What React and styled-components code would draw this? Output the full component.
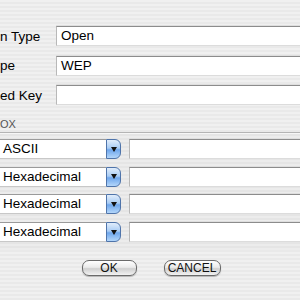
import React from "react";
import styled, { createGlobalStyle } from "styled-components";

const GlobalStyle = createGlobalStyle`
  html, body {
    margin: 0;
    padding: 0;
    width: 300px;
    height: 300px;
    overflow: hidden;
  }
  body {
    font-family: "Liberation Sans", "DejaVu Sans", sans-serif;
    background: repeating-linear-gradient(
      to bottom,
      #f0f0f0 0px,
      #f0f0f0 2px,
      #e9e9e9 2px,
      #e9e9e9 4px
    );
  }
`;

const Dialog = styled.div`
  width: 300px;
  height: 300px;
  display: flex;
  flex-direction: column;
  padding-top: 26px;
  box-sizing: border-box;
  overflow: hidden;
`;

const Fields = styled.div`
  display: flex;
  flex-direction: column;
  gap: 9.5px;
`;

const FieldRow = styled.div`
  display: flex;
  align-items: center;
  height: 20px;
`;

const Label = styled.div`
  width: 56px;
  flex: none;
  font-size: 13.5px;
  color: #000;
  white-space: nowrap;
`;

const TextField = styled.div`
  flex: 1;
  height: 20px;
  box-sizing: border-box;
  background: #fff;
  border-top: 1px solid #8c8c8c;
  border-left: 1px solid #b8b8b8;
  border-right: ${(p) => (p.$open ? "none" : "1px solid #b8b8b8")};
  border-bottom: 1px solid #dcdcdc;
  box-shadow: 0 -1px 0 #dedede;
  padding: 0 4px;
  font-size: 13.5px;
  line-height: 18px;
  color: #000;
`;

const GroupTitle = styled.div`
  margin-top: 13px;
  height: 12px;
  font-size: 11px;
  line-height: 12px;
  color: #555;
`;

const GroupBox = styled.div`
  margin-top: 2px;
  border-top: 1px solid #b4b4b4;
  box-shadow: inset 0 1px 0 #f6f6f6;
  padding: 6px 0 8px;
  display: flex;
  flex-direction: column;
  gap: 7.7px;
  background: rgba(0, 0, 0, 0.015);
`;

const KeyRow = styled.div`
  display: flex;
  align-items: center;
  height: 20px;
  gap: 8px;
  margin-left: -4px;
`;

const Popup = styled.div`
  width: 125px;
  height: 20px;
  flex: none;
  display: flex;
  box-sizing: border-box;
`;

const PopupValue = styled.div`
  flex: 1;
  background: #fff;
  border-top: 1px solid #9a9a9a;
  border-bottom: 1px solid #c8c8c8;
  box-sizing: border-box;
  padding-left: 7px;
  font-size: 13.5px;
  line-height: 18px;
  color: #000;
`;

const PopupArrow = styled.div`
  width: 15px;
  flex: none;
  box-sizing: border-box;
  border: 1px solid #4f74aa;
  border-radius: 0 6px 6px 0;
  background: linear-gradient(
    to bottom,
    #e1edfb 0%,
    #a9ccf4 45%,
    #6ea6ec 55%,
    #b3d6fa 100%
  );
  display: flex;
  align-items: center;
  justify-content: center;
  &::after {
    content: "";
    width: 0;
    height: 0;
    border-left: 3.5px solid transparent;
    border-right: 3.5px solid transparent;
    border-top: 5px solid #111;
  }
`;

const Buttons = styled.div`
  margin-top: 10px;
  display: flex;
  justify-content: center;
  gap: 27px;
  padding-left: 2px;
`;

const Button = styled.button`
  width: ${(p) => p.$w}px;
  height: 16px;
  padding: 0;
  border: 1px solid #6a6a6a;
  border-radius: 7px;
  background: linear-gradient(
    to bottom,
    #ffffff 0%,
    #ebebeb 45%,
    #d0d0d0 55%,
    #f2f2f2 100%
  );
  box-shadow: 0 1px 1px rgba(0, 0, 0, 0.25);
  font-family: "Liberation Sans", "DejaVu Sans", sans-serif;
  font-size: 12px;
  line-height: 14px;
  color: #111;
  cursor: pointer;
  &:focus {
    outline: none;
  }
`;

const keys = ["ASCII", "Hexadecimal", "Hexadecimal", "Hexadecimal"];

export default function App() {
  return (
    <>
      <GlobalStyle />
      <Dialog>
        <Fields>
          <FieldRow>
            <Label>n Type</Label>
            <TextField $open>Open</TextField>
          </FieldRow>
          <FieldRow>
            <Label>pe</Label>
            <TextField $open>WEP</TextField>
          </FieldRow>
          <FieldRow>
            <Label>ed Key</Label>
            <TextField $open />
          </FieldRow>
        </Fields>
        <GroupTitle>OX</GroupTitle>
        <GroupBox>
          {keys.map((k, i) => (
            <KeyRow key={i}>
              <Popup>
                <PopupValue>{k}</PopupValue>
                <PopupArrow />
              </Popup>
              <TextField $open />
            </KeyRow>
          ))}
        </GroupBox>
        <Buttons>
          <Button $w={55}>OK</Button>
          <Button $w={57}>CANCEL</Button>
        </Buttons>
      </Dialog>
    </>
  );
}
